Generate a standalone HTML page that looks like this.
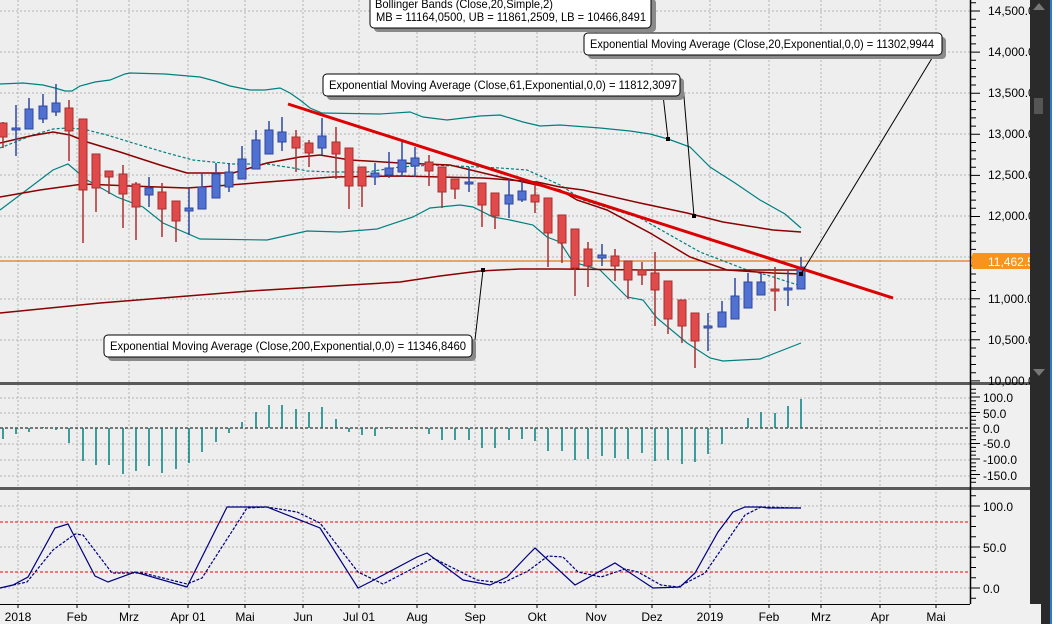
<!DOCTYPE html>
<html><head><meta charset="utf-8"><style>
html,body{margin:0;padding:0;width:1056px;height:624px;overflow:hidden;background:#f0f0f0;}
svg{display:block;font-family:"Liberation Sans",sans-serif;}
</style></head><body>
<svg id="s" width="1056" height="624" viewBox="0 0 1056 624" xmlns="http://www.w3.org/2000/svg">
<rect x="0" y="0" width="1056" height="624" fill="#f0f0f0"/>
<rect x="0" y="0" width="970" height="382" fill="#eeeeee"/>
<rect x="0" y="385" width="970" height="102" fill="#eeeeee"/>
<rect x="0" y="490" width="970" height="114" fill="#eeeeee"/>
<g stroke="#b4b4b4" stroke-width="1" stroke-dasharray="2,2" fill="none">
<path d="M18 0V604M77 0V604M129 0V604M188 0V604M245 0V604M303 0V604M359 0V604M417 0V604M475 0V604M537 0V604M596 0V604M652 0V604M710 0V604M769 0V604M821 0V604M880 0V604M936 0V604"/>
<path d="M0 11H970M0 52H970M0 93H970M0 134H970M0 175H970M0 216H970M0 257H970M0 299H970M0 340H970"/>
<path d="M0 398H970M0 413H970M0 444H970M0 460H970M0 476H970"/>
<path d="M0 506H970M0 547H970M0 588H970"/>
</g>
<line x1="0" y1="261" x2="970" y2="261" stroke="#e07818" stroke-width="1.2"/>
<g fill="none" stroke="#008080" stroke-width="1.2">
<polyline points="0,84 23,83 43,85 55,88 65,91 72,91 80,86 95,82 110,80 125,74 130,73 165,74 200,77 215,81 230,86 250,90 265,90 280,88 290,93 300,100 310,108 322,113 380,114 410,112 423,117 447,120 480,116 500,115 523,122 540,126 560,125 600,128 630,131 650,134 668,139 690,147 710,167 735,183 760,200 785,214 801,228"/>
<polyline points="0,210 20,195 53,170 68,164 87,180 117,197 143,207 163,223 200,239 267,240 307,231 340,232 377,229 413,217 430,208 460,205 473,207 493,217 510,220 533,225 547,237 560,242 573,262 600,270 627,297 643,300 657,318 687,343 710,358 723,361 760,359 801,343"/>
<polyline stroke-dasharray="3,2" points="0,148 33,135 53,129 67,128 83,129 107,135 133,143 167,153 193,160 233,164 267,164 293,168 307,171 333,172 367,172 400,167 433,165 500,168 527,170 560,185 583,200 640,218 700,252 747,270 767,275 801,286"/>
</g>
<g fill="none" stroke="#8b0000" stroke-width="1.5">
<polyline points="0,143 30,136 53,132 70,135 87,142 120,152 160,165 187,173 233,173 250,168 267,163 300,157 320,155 350,160 400,163 450,165 500,177 537,185 560,190 577,200 607,210 650,233 690,257 727,270 773,273 801,274"/>
<polyline points="0,197 40,190 83,184 130,186 187,188 230,185 267,182 333,177 400,176 483,178 537,182 560,187 583,190 640,203 687,213 723,222 773,230 801,232"/>
<polyline points="0,313 50,308 100,303 150,299 200,295 250,291 300,288 350,285 400,282 440,276 480,271 520,269 560,269 650,270 720,270 801,270"/>
</g>
<g id="candles"></g>
<line x1="288" y1="104" x2="893" y2="298" stroke="#dd0000" stroke-width="3"/>
<g stroke="#000" stroke-width="1" fill="none">
<line x1="940" y1="45" x2="801" y2="274"/>
<line x1="663" y1="95" x2="668" y2="139"/>
<line x1="683" y1="85" x2="694" y2="216"/>
<line x1="475" y1="340" x2="483" y2="270"/>
</g>
<g fill="#000"><rect x="799" y="272" width="4" height="4"/><rect x="666" y="137" width="4" height="4"/><rect x="692" y="214" width="4" height="4"/><rect x="481" y="268" width="4" height="4"/></g>
<g font-size="12" fill="#000">
<rect x="374" y="-1" width="282" height="33" rx="4" fill="#8a8a8a"/>
<rect x="370" y="-5" width="281" height="33" rx="4" fill="#fff" stroke="#000"/>
<text x="375" y="8" textLength="178" lengthAdjust="spacingAndGlyphs">Bollinger Bands (Close,20,Simple,2)</text>
<text x="376" y="21" textLength="270" lengthAdjust="spacingAndGlyphs">MB = 11164,0500, UB = 11861,2509, LB = 10466,8491</text>
<rect x="588" y="37" width="358" height="22" rx="4" fill="#8a8a8a"/>
<rect x="584" y="33" width="358" height="22" rx="4" fill="#fff" stroke="#000"/>
<text x="590" y="48" textLength="344" lengthAdjust="spacingAndGlyphs">Exponential Moving Average (Close,20,Exponential,0,0) = 11302,9944</text>
<rect x="327" y="78" width="357" height="22" rx="4" fill="#8a8a8a"/>
<rect x="323" y="74" width="357" height="22" rx="4" fill="#fff" stroke="#000"/>
<text x="329" y="89" textLength="348" lengthAdjust="spacingAndGlyphs">Exponential Moving Average (Close,61,Exponential,0,0) = 11812,3097</text>
<rect x="108" y="339" width="368" height="22" rx="4" fill="#8a8a8a"/>
<rect x="104" y="335" width="368" height="22" rx="4" fill="#fff" stroke="#000"/>
<text x="110" y="350" textLength="356" lengthAdjust="spacingAndGlyphs">Exponential Moving Average (Close,200,Exponential,0,0) = 11346,8460</text>
</g>
<line x1="0" y1="428" x2="970" y2="428" stroke="#000" stroke-dasharray="3,2"/>
<g id="hist" stroke="#008080" stroke-width="1.5"></g>
<g stroke="#ff0000" stroke-dasharray="3,2" stroke-width="1"><line x1="0" y1="522" x2="970" y2="522"/><line x1="0" y1="572" x2="970" y2="572"/></g>
<g fill="none" stroke="#000080" stroke-width="1.2">
<polyline points="0,588 13,585 28,577 55,528 68,524 95,576 108,582 135,572 187,587 227,507 267,507 320,528 358,588 370,582 417,557 427,553 463,580 490,585 507,577 528,555 535,548 575,585 615,563 653,588 680,587 695,573 718,532 733,512 745,507 761,507 768,508 801,508"/>
<polyline stroke-dasharray="3,1.5" points="0,588 27,582 53,550 75,534 83,535 112,573 143,573 187,584 202,578 247,508 267,507 297,512 320,523 358,572 383,584 433,558 477,580 503,583 528,571 548,556 563,557 578,572 601,577 625,569 638,572 661,585 678,587 705,573 745,515 761,507 801,508"/>
</g>
<rect x="0" y="382" width="1030" height="3" fill="#5a5a5a"/>
<rect x="0" y="487" width="1030" height="3" fill="#5a5a5a"/>
<line x1="970.5" y1="0" x2="970.5" y2="604" stroke="#000" stroke-width="1.5"/>
<line x1="0" y1="604.5" x2="970" y2="604.5" stroke="#000"/>
<g id="ticks" stroke="#000" stroke-width="1"></g>
<path d="M973 253H1030V269H973Q969 261 973 253Z" fill="#f7941d"/>
<text x="988" y="266" font-size="12" fill="#fff">11,462.5</text>
<g font-size="12" fill="#000">
<text x="988" y="15">14,500.0</text><text x="988" y="56">14,000.0</text><text x="988" y="97">13,500.0</text><text x="988" y="138">13,000.0</text><text x="988" y="179">12,500.0</text><text x="988" y="220">12,000.0</text><text x="988" y="303">11,000.0</text><text x="988" y="344">10,500.0</text><text x="988" y="385">10,000.0</text>
<text x="983" y="402">100.0</text><text x="983" y="418">50.0</text><text x="983" y="433">0.0</text><text x="983" y="448">-50.0</text><text x="983" y="464">-100.0</text><text x="983" y="480">-150.0</text>
<text x="983" y="511">100.0</text><text x="983" y="552">50.0</text><text x="983" y="593">0.0</text>
</g>
<g font-size="12" fill="#000" text-anchor="middle">
<text x="18" y="621">2018</text><text x="77" y="621">Feb</text><text x="129" y="621">Mrz</text><text x="188" y="621">Apr 01</text><text x="245" y="621">Mai</text><text x="303" y="621">Jun</text><text x="359" y="621">Jul 01</text><text x="417" y="621">Aug</text><text x="475" y="621">Sep</text><text x="537" y="621">Okt</text><text x="596" y="621">Nov</text><text x="652" y="621">Dez</text><text x="710" y="621">2019</text><text x="769" y="621">Feb</text><text x="821" y="621">Mrz</text><text x="880" y="621">Apr</text><text x="936" y="621">Mai</text>
</g>
<rect x="1030" y="0" width="20" height="604" fill="#2a2a2a"/>
<path d="M1033 10L1039 3L1045 10Z" fill="#777"/>
<rect x="1034" y="98" width="9" height="16" fill="#555"/>
<path d="M1033 369L1039 376L1045 369Z" fill="#777"/>
<rect x="1050" y="0" width="2" height="624" fill="#2a7ad8"/>
<rect x="1052" y="0" width="4" height="624" fill="#fff"/>
<rect x="1041" y="604" width="9" height="20" fill="#2a2a2a"/>
</svg>
<script>
var C=[[3,122,123,137,148,0],[16,105,128,130,156,1],[29,98,109,129,129,1],[43,94,106,119,123,1],[56,84,103,112,116,1],[69,100,108,131,161,0],[83,119,119,190,243,0],[96,154,154,188,212,0],[109,171,171,177,194,0],[123,165,174,194,228,0],[136,182,184,207,240,0],[149,177,188,195,207,1],[162,183,192,209,237,0],[176,201,201,221,242,0],[189,188,208,211,235,1],[202,173,187,209,209,1],[216,163,174,198,198,1],[229,163,172,187,192,1],[242,146,159,179,179,1],[256,130,140,169,169,1],[269,121,130,154,154,1],[282,117,132,142,151,1],[296,130,137,148,172,0],[309,140,143,153,167,0],[322,118,136,148,155,1],[336,127,142,154,179,0],[349,148,148,186,209,0],[362,167,167,186,207,0],[375,163,173,177,185,1],[389,152,168,175,178,1],[402,142,160,172,177,1],[415,147,158,166,177,1],[429,155,162,171,186,0],[442,167,167,192,208,0],[455,179,179,189,199,0],[469,167,182,184,192,1],[482,183,183,205,227,0],[495,193,193,216,229,0],[509,179,195,204,218,1],[522,178,191,200,202,1],[535,184,195,202,213,0],[548,198,198,233,267,0],[562,215,215,243,263,0],[575,229,229,268,296,0],[588,242,249,266,287,0],[602,244,255,258,266,1],[615,249,256,266,281,0],[628,261,261,280,299,0],[642,262,270,275,285,0],[655,252,273,290,326,0],[668,281,281,319,334,0],[682,300,300,326,343,0],[695,313,313,341,368,0],[708,313,326,327,351,1],[722,301,312,327,327,1],[735,278,296,319,319,1],[748,273,282,308,308,1],[761,273,282,295,295,1],[775,267,289,291,311,0],[788,271,288,290,306,1],[801,257,267,289,289,1]];
var H=[439,434,432,427,430,443,461,465,465,474,471,466,473,469,463,452,442,433,422,412,405,405,409,412,407,419,432,435,436,427,428,427,434,440,440,440,448,448,440,439,441,451,451,460,459,456,458,459,453,461,460,464,462,454,444,429,418,412,413,406,399];
var ns="http://www.w3.org/2000/svg";
function el(p,t,a){var e=document.createElementNS(ns,t);for(var k in a)e.setAttribute(k,a[k]);p.appendChild(e);return e;}
var g=document.getElementById("candles");
C.forEach(function(c){var x=c[0],b=c[5];var st=b?"#2e48a0":"#a83030",fi=b?"#5070d2":"#e04a4a";
el(g,"line",{x1:x,y1:c[1],x2:x,y2:c[4],stroke:st,"stroke-width":1.5});
var h=Math.max(c[3]-c[2],2);
el(g,"rect",{x:x-4,y:c[2],width:8,height:h,fill:fi,stroke:st,"stroke-width":1});});
var hg=document.getElementById("hist");
H.forEach(function(v,i){var x=C[i][0];el(hg,"line",{x1:x,y1:428,x2:x,y2:v});});
var t=document.getElementById("ticks"),d="";
for(var p=10000;p<=14600;p+=100){var y=11+(14500-p)*0.0822;if(y<0||y>381)continue;d+="M971 "+y.toFixed(1)+"H"+(p%500==0?980:976);}
for(var v=-175;v<=125;v+=12.5){var y=428-v*0.31;if(y<386||y>486)continue;d+="M971 "+y.toFixed(1)+"H"+(v%50==0?980:976);}
for(var v=-25;v<=125;v+=12.5){var y=588-v*0.82;if(y<491||y>603)continue;d+="M971 "+y.toFixed(1)+"H"+(v%50==0?980:976);}
[18,77,129,188,245,303,359,417,475,537,596,652,710,769,821,880,936].forEach(function(x){d+="M"+x+" 604V608";});
el(t,"path",{d:d});
</script>
</body></html>
